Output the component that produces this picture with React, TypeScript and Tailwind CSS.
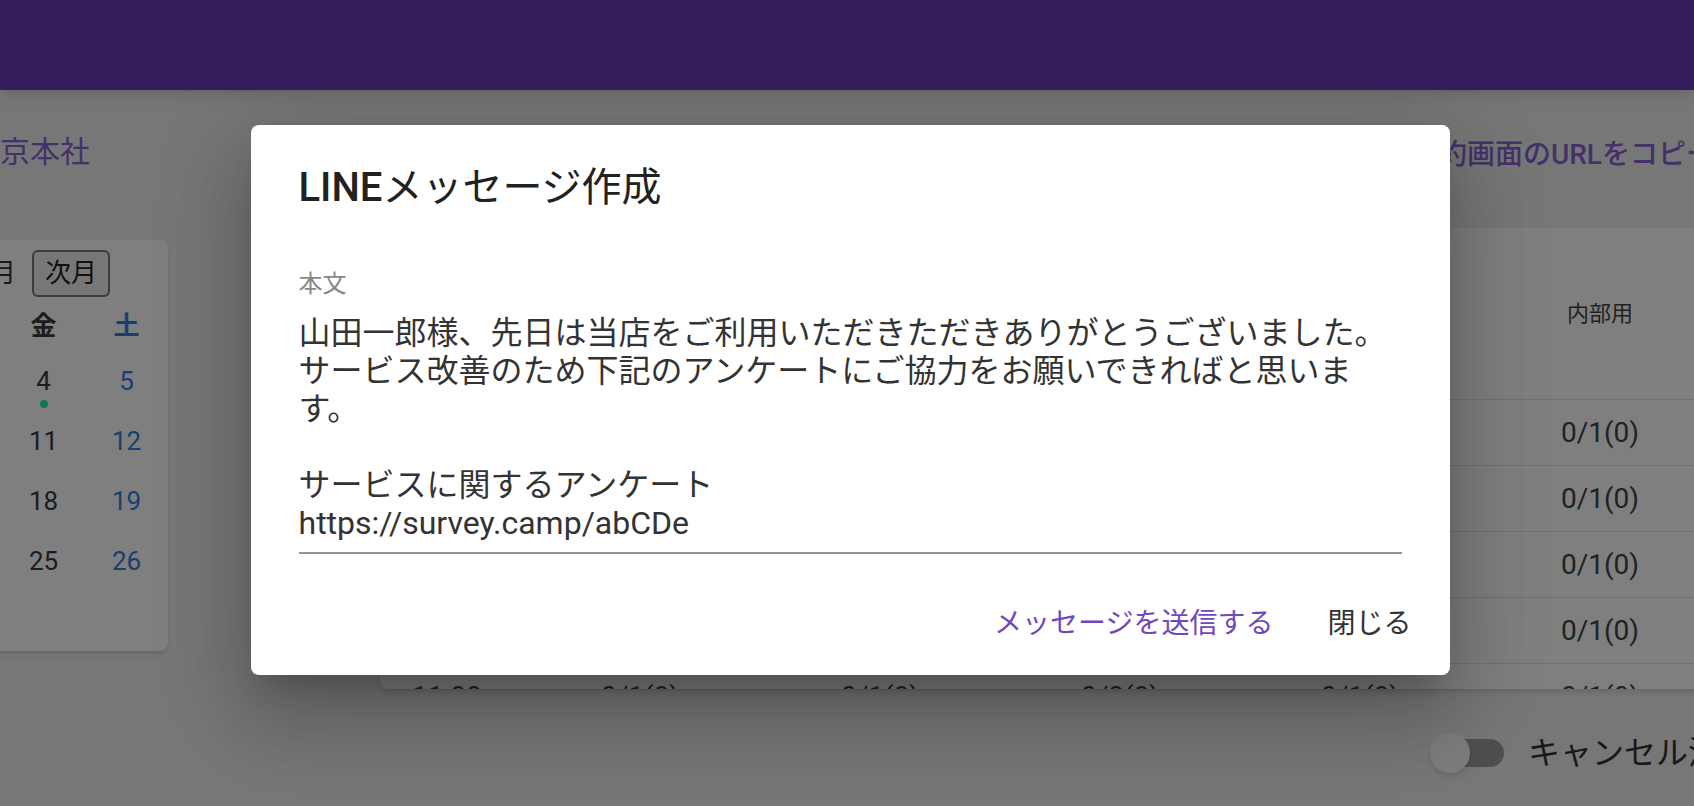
import React from "react";

const dayNames = ["日", "月", "火", "水", "木", "金", "土"];

const weeks: (number | null)[][] = [
  [null, null, 1, 2, 3, 4, 5],
  [6, 7, 8, 9, 10, 11, 12],
  [13, 14, 15, 16, 17, 18, 19],
  [20, 21, 22, 23, 24, 25, 26],
  [27, 28, 29, 30, null, null, null],
];

const markedDays = [4];

const columns = ["窓口A", "窓口B", "窓口C", "窓口D", "内部用"];

const rows = [
  { time: "09:00", values: ["0/1(0)", "0/1(0)", "0/2(0)", "0/1(0)", "0/1(0)"] },
  { time: "09:30", values: ["0/1(0)", "0/1(0)", "0/2(0)", "0/1(0)", "0/1(0)"] },
  { time: "10:00", values: ["0/1(0)", "0/1(0)", "0/2(0)", "0/1(0)", "0/1(0)"] },
  { time: "10:30", values: ["0/1(0)", "0/1(0)", "0/2(0)", "0/1(0)", "0/1(0)"] },
  { time: "11:00", values: ["0/1(0)", "0/1(0)", "0/2(0)", "0/1(0)", "0/1(0)"] },
];

const message =
  "山田一郎様、先日は当店をご利用いただきただきありがとうございました。\nサービス改善のため下記のアンケートにご協力をお願いできればと思います。\n\nサービスに関するアンケート\nhttps://survey.camp/abCDe";

const dayColor = (i: number) =>
  i === 0 ? "text-[#e53935]" : i === 6 ? "text-[#2f7fe0]" : "text-[#3a3a3a]";

const Calendar: React.FC = () => (
  <div className="w-[581px] h-[411px] bg-white rounded-lg shadow-md overflow-hidden">
    {/* month switcher */}
    <div className="flex justify-end items-center gap-4 pr-[58px] pt-[10px]">
      <button className="w-[78px] h-[47px] border-2 border-[#767676] rounded-[6px] bg-[#efefef] text-[26px] text-[#222]">
        前月
      </button>
      <span className="text-[26px] text-[#333]">2021年6月</span>
      <button className="w-[78px] h-[47px] border-2 border-[#767676] rounded-[6px] bg-[#efefef] text-[26px] text-[#222]">
        次月
      </button>
    </div>

    <div className="grid grid-cols-7 h-[59px] items-center">
      {dayNames.map((d, i) => (
        <div key={d} className={`text-center text-[26px] font-bold ${dayColor(i)}`}>
          {d}
        </div>
      ))}
    </div>

    {weeks.map((week, wi) => (
      <div key={wi} className="grid grid-cols-7 h-[60px]">
        {week.map((day, i) => (
          <div key={i} className="flex flex-col items-center pt-[10px]">
            {day !== null && (
              <>
                <span className={`text-[26px] leading-[30px] ${dayColor(i)}`}>{day}</span>
                {markedDays.includes(day) && (
                  <span className="mt-[4px] w-[8px] h-[8px] rounded-full bg-[#1de9b6]" />
                )}
              </>
            )}
          </div>
        ))}
      </div>
    ))}
  </div>
);

const SlotTable: React.FC = () => (
  <div className="h-[461px] bg-white rounded-lg shadow-md overflow-hidden">
    <div className="grid grid-cols-[140px_repeat(5,240px)_1fr] h-[172px] items-center border-b border-[#e0e0e0]">
      <div className="pl-8 text-[22px] text-[#444]">時間</div>
      {columns.map((c) => (
        <div key={c} className="text-center text-[22px] text-[#444]">
          {c}
        </div>
      ))}
      <div />
    </div>
    {rows.map((r) => (
      <div
        key={r.time}
        className="grid grid-cols-[140px_repeat(5,240px)_1fr] h-[66px] items-center border-b border-[#e0e0e0]"
      >
        <div className="pl-8 text-[28px] text-[#444]">{r.time}</div>
        {r.values.map((v, i) => (
          <div key={i} className="text-center text-[28px] text-[#444]">
            {v}
          </div>
        ))}
        <div />
      </div>
    ))}
  </div>
);

const App: React.FC = () => {
  return (
    <div className="relative w-full h-[806px] overflow-hidden bg-[#eeeeee] font-['Roboto','Noto_Sans_CJK_JP',sans-serif]">
      {/* app bar */}
      <div className="h-[90px] bg-[#673ab7] shadow-lg" />

      <div className="flex gap-[212px] -ml-[413px] pt-[36px]">
        {/* left column */}
        <div className="w-[581px] shrink-0">
          <div className="h-[50px] flex justify-end items-center pr-[78px]">
            <span className="text-[30px] text-[#8a63d2]">東京本社</span>
          </div>
          <div className="mt-[64px]">
            <Calendar />
          </div>
          <div className="mt-[75px] flex justify-end pr-[164px]">
            <span className="text-[26px] leading-[40px] text-[#333]">表示開始日</span>
          </div>
        </div>

        {/* right column */}
        <div className="w-[1490px] shrink-0">
          <div className="h-[50px] pt-[8px] flex justify-end items-center pr-[140px]">
            <button className="h-[42px] px-4 text-[28px] font-medium text-[#8a63d2] whitespace-nowrap">
              予約画面のURLをコピー
            </button>
          </div>
          <div className="mt-[52px]">
            <SlotTable />
          </div>
          <div className="mt-[39px] h-[50px] flex justify-end items-center gap-[18px] pr-[22px]">
            <div className="relative w-[80px] h-[40px]">
              <div className="absolute left-[6px] top-[6px] w-[68px] h-[28px] rounded-full bg-[#9e9e9e]" />
              <div className="absolute left-0 top-0 w-[40px] h-[40px] rounded-full bg-[#fafafa] shadow-md" />
            </div>
            <span className="text-[32px] text-[#333] whitespace-nowrap">キャンセル済みを表示</span>
          </div>
        </div>
      </div>

      {/* dialog backdrop */}
      <div className="absolute inset-0 bg-black/50 flex items-center justify-center pl-[6px] pb-[6px]">
        <div className="w-[1199px] bg-white rounded-lg shadow-[0_22px_30px_-14px_rgba(0,0,0,0.2),0_48px_76px_6px_rgba(0,0,0,0.14),0_18px_92px_16px_rgba(0,0,0,0.12)]">
          <div className="pt-[31px] px-12 text-[40px] leading-[64px] text-[#212121]">
            <span className="font-medium">LINE</span>
            <span>メッセージ作成</span>
          </div>

          <div className="pt-[54px] px-12">
            <div className="text-[24px] leading-[20px] text-[#888]">本文</div>
            <div className="mt-[20px] pb-[10px] border-b-2 border-[#949494]">
              <div className="text-[32px] leading-[38px] text-[#333] whitespace-pre-wrap">
                {message}
              </div>
            </div>
          </div>

          <div className="flex justify-end items-center gap-4 px-4 pt-[39px] pb-[20px]">
            <button className="h-[62px] px-4 text-[28px] text-[#7048bc]">
              メッセージを送信する
            </button>
            <button className="h-[62px] min-w-[128px] px-4 text-[28px] text-[#333]">
              閉じる
            </button>
          </div>
        </div>
      </div>
    </div>
  );
};

export default App;
